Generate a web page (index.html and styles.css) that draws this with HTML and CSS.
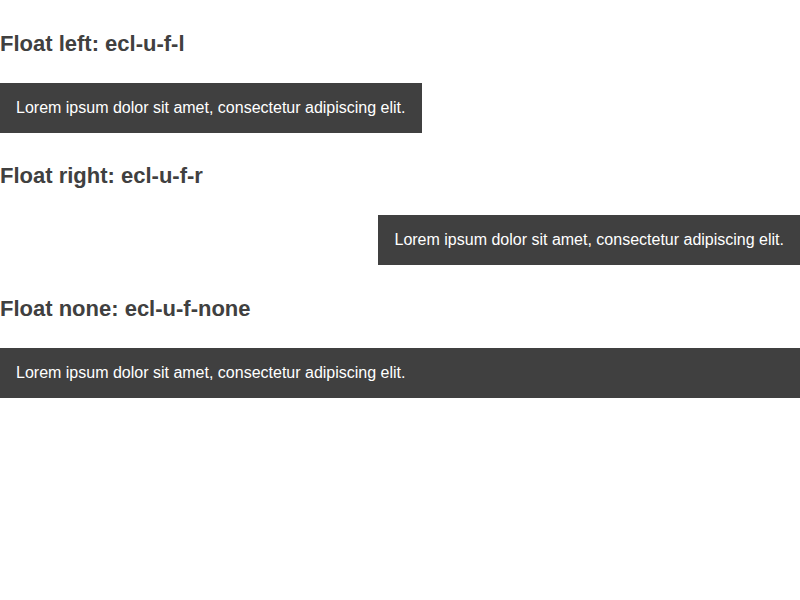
FILE: index.html
```html
<!DOCTYPE html>
<html>
<head>
<meta charset="utf-8">
<link rel="stylesheet" href="styles.css">
</head>
<body>
<section class="demo">
  <h3 class="demo-title">Float left: ecl-u-f-l</h3>
  <div class="demo-row"><div class="box f-l">Lorem ipsum dolor sit amet, consectetur adipiscing elit.</div></div>
</section>
<section class="demo">
  <h3 class="demo-title">Float right: ecl-u-f-r</h3>
  <div class="demo-row"><div class="box f-r">Lorem ipsum dolor sit amet, consectetur adipiscing elit.</div></div>
</section>
<section class="demo">
  <h3 class="demo-title">Float none: ecl-u-f-none</h3>
  <div class="demo-row"><div class="box f-none">Lorem ipsum dolor sit amet, consectetur adipiscing elit.</div></div>
</section>
</body>
</html>
```

FILE: styles.css
```css
html, body {
  margin: 0;
  padding: 0;
  background: #fff;
}
body {
  padding-top: 0.6px;
  font-family: "Liberation Sans", Arial, sans-serif;
  color: #404040;
}
.demo {
  padding-top: 31.4px;
}
.demo-title {
  margin: 0 0 27px;
  font-size: 22px;
  line-height: 24px;
  font-weight: bold;
  color: #404040;
}
.demo-row {
  display: flow-root;
}
.box {
  background: #404040;
  color: #fff;
  font-size: 16px;
  line-height: 18px;
  padding: 16px;
}
.f-l { float: left; }
.f-r { float: right; }
.f-none { float: none; }
```
